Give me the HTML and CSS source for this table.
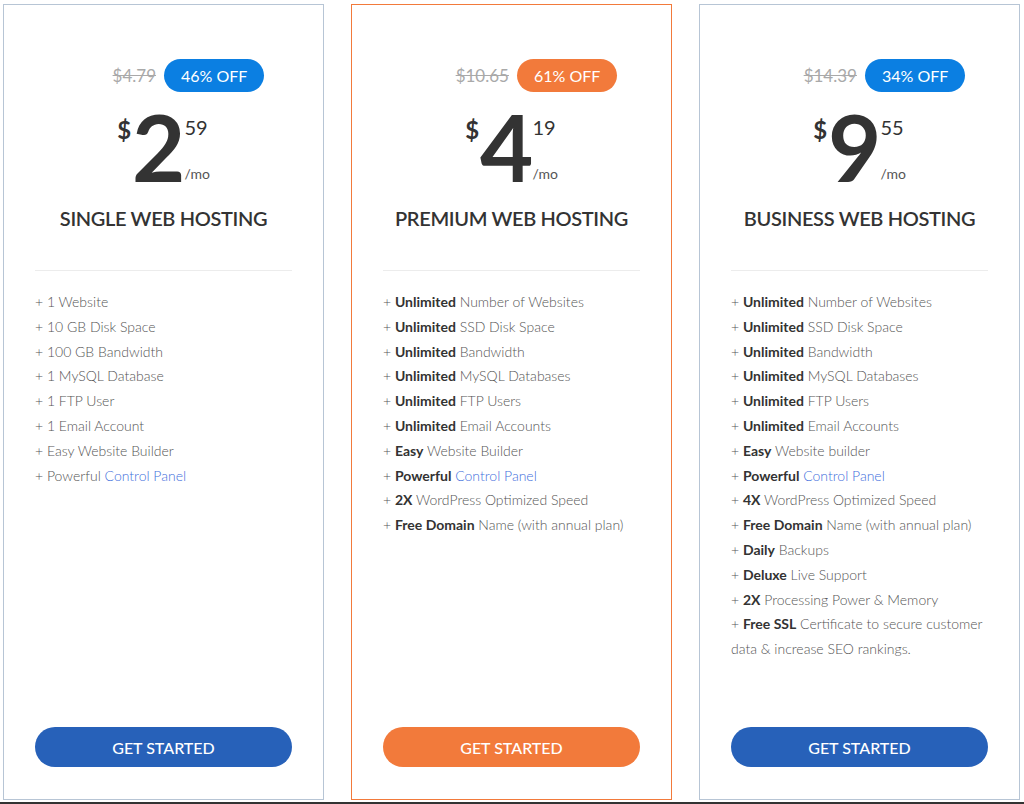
FILE: index.html
```html
<!DOCTYPE html>
<html lang="en">
<head>
  <meta charset="UTF-8" />
  <meta name="viewport" content="width=device-width, initial-scale=1.0"/>
  <title>Web Hosting Plans</title>
  <link rel="stylesheet" href="styles.css">
</head>
<body>

  <div class="plans">

    <div class="plan">
      <div class="deal">
        <span class="old-price">$4.79</span>
        <span class="badge">46% OFF</span>
      </div>
      <div class="price">
        <span class="currency">$</span>
        <span class="amount">2</span>
        <span class="cents">
          <span class="cents-num">59</span>
          <span class="period">/mo</span>
        </span>
      </div>
      <h2 class="plan-name">SINGLE WEB HOSTING</h2>
      <ul class="features">
        <li>+ 1 Website</li>
        <li>+ 10 GB Disk Space</li>
        <li>+ 100 GB Bandwidth</li>
        <li>+ 1 MySQL Database</li>
        <li>+ 1 FTP User</li>
        <li>+ 1 Email Account</li>
        <li>+ Easy Website Builder</li>
        <li>+ Powerful <a href="#">Control Panel</a></li>
      </ul>
      <button class="start-button">GET STARTED</button>
    </div>

    <div class="plan featured">
      <div class="deal">
        <span class="old-price">$10.65</span>
        <span class="badge">61% OFF</span>
      </div>
      <div class="price">
        <span class="currency">$</span>
        <span class="amount">4</span>
        <span class="cents">
          <span class="cents-num">19</span>
          <span class="period">/mo</span>
        </span>
      </div>
      <h2 class="plan-name">PREMIUM WEB HOSTING</h2>
      <ul class="features">
        <li>+ <strong>Unlimited</strong> Number of Websites</li>
        <li>+ <strong>Unlimited</strong> SSD Disk Space</li>
        <li>+ <strong>Unlimited</strong> Bandwidth</li>
        <li>+ <strong>Unlimited</strong> MySQL Databases</li>
        <li>+ <strong>Unlimited</strong> FTP Users</li>
        <li>+ <strong>Unlimited</strong> Email Accounts</li>
        <li>+ <strong>Easy</strong> Website Builder</li>
        <li>+ <strong>Powerful</strong> <a href="#">Control Panel</a></li>
        <li>+ <strong>2X</strong> WordPress Optimized Speed</li>
        <li>+ <strong>Free Domain</strong> Name (with annual plan)</li>
      </ul>
      <button class="start-button">GET STARTED</button>
    </div>

    <div class="plan">
      <div class="deal">
        <span class="old-price">$14.39</span>
        <span class="badge">34% OFF</span>
      </div>
      <div class="price">
        <span class="currency">$</span>
        <span class="amount">9</span>
        <span class="cents">
          <span class="cents-num">55</span>
          <span class="period">/mo</span>
        </span>
      </div>
      <h2 class="plan-name">BUSINESS WEB HOSTING</h2>
      <ul class="features">
        <li>+ <strong>Unlimited</strong> Number of Websites</li>
        <li>+ <strong>Unlimited</strong> SSD Disk Space</li>
        <li>+ <strong>Unlimited</strong> Bandwidth</li>
        <li>+ <strong>Unlimited</strong> MySQL Databases</li>
        <li>+ <strong>Unlimited</strong> FTP Users</li>
        <li>+ <strong>Unlimited</strong> Email Accounts</li>
        <li>+ <strong>Easy</strong> Website builder</li>
        <li>+ <strong>Powerful</strong> <a href="#">Control Panel</a></li>
        <li>+ <strong>4X</strong> WordPress Optimized Speed</li>
        <li>+ <strong>Free Domain</strong> Name (with annual plan)</li>
        <li>+ <strong>Daily</strong> Backups</li>
        <li>+ <strong>Deluxe</strong> Live Support</li>
        <li>+ <strong>2X</strong> Processing Power &amp; Memory</li>
        <li>+ <strong>Free SSL</strong> Certificate to secure customer data &amp; increase SEO rankings.</li>
      </ul>
      <button class="start-button">GET STARTED</button>
    </div>

  </div>

  <div class="bottom-bar"></div>

</body>
</html>
```

FILE: styles.css
```css
body {
  font-family: 'Lato', 'Open Sans', sans-serif;
  background-color: #ffffff;
  margin: 0;
  padding: 4px 0 0 3px;
  overflow: hidden;
}

.plans {
  display: flex;
  gap: 27px;
  height: 796px;
}

.plan {
  box-sizing: border-box;
  width: 321px;
  height: 100%;
  border: 1px solid #b7c5d5;
  padding: 54px 31px 32px;
  display: flex;
  flex-direction: column;
  background-color: #fff;
}

.plan.featured {
  border-color: #f27a3b;
}

.deal {
  display: flex;
  align-items: center;
  justify-content: center;
  gap: 8px;
  padding-left: 50px;
}

.old-price {
  font-size: 17px;
  color: #a9a9a9;
  text-decoration: line-through;
}

.badge {
  display: inline-block;
  height: 33px;
  line-height: 33px;
  padding: 0 17px;
  border-radius: 17px;
  background-color: #0b7fe2;
  color: #fff;
  font-size: 16px;
}

.featured .badge {
  background-color: #f27a3b;
}

.price {
  display: flex;
  justify-content: center;
  margin-top: 9px;
  color: #333;
}

.currency {
  font-size: 24px;
  font-weight: 700;
  line-height: 1;
  margin-top: 17px;
  margin-right: 1px;
}

.amount {
  font-size: 92px;
  font-weight: 700;
  line-height: 92px;
}

.cents {
  display: flex;
  flex-direction: column;
  margin-left: -1px;
  padding-bottom: 12px;
}

.cents-num {
  font-size: 20px;
  line-height: 1;
  margin-top: 16px;
}

.period {
  margin-top: auto;
  font-size: 14px;
  line-height: 1;
  color: #555;
}

.plan-name {
  margin: 13px 0 0;
  font-size: 20px;
  font-weight: 600;
  line-height: 24px;
  letter-spacing: -0.35px;
  color: #333;
  text-align: center;
  white-space: nowrap;
  padding-bottom: 40px;
  border-bottom: 1px solid #ececec;
}

.features {
  list-style: none;
  margin: 19px 0 0;
  padding: 0;
  font-size: 14px;
  line-height: 24.8px;
  font-weight: 300;
  color: #555;
}

.features strong {
  font-weight: 700;
  color: #333;
}

.features a {
  color: #3f6fdc;
  text-decoration: none;
}

.start-button {
  margin-top: auto;
  height: 40px;
  border: none;
  border-radius: 20px;
  background-color: #2761b9;
  color: #fff;
  font-family: inherit;
  font-size: 16px;
  font-weight: 500;
  cursor: pointer;
}

.featured .start-button {
  background-color: #f27a3b;
}

.bottom-bar {
  height: 10px;
  margin: 2px 0 0 -3px;
  background-color: #333;
}
```
